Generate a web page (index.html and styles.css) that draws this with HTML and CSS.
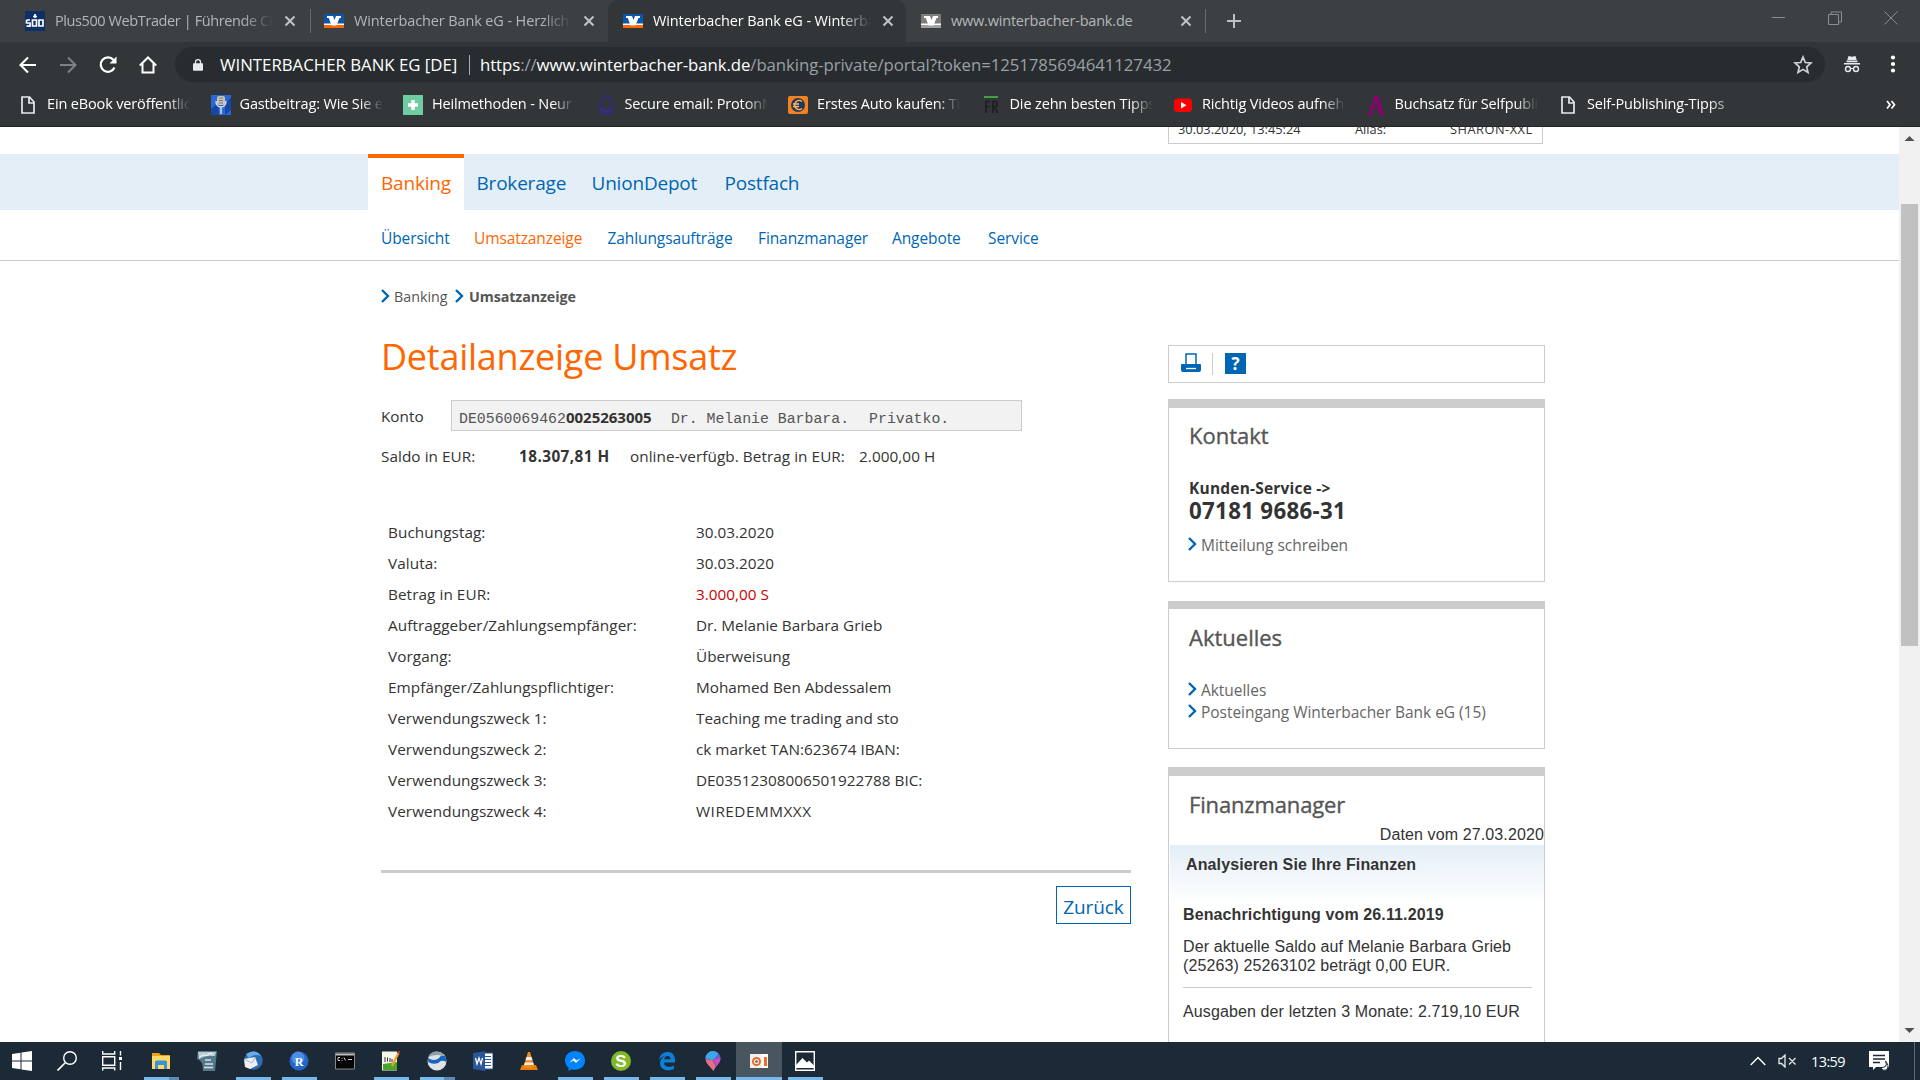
FILE: index.html
```html
<!DOCTYPE html>
<html lang="de">
<head>
<meta charset="utf-8">
<title>Winterbacher Bank eG - Umsatzanzeige</title>
<link rel="stylesheet" href="styles.css">
</head>
<body>
<svg class="defs" aria-hidden="true">
  <symbol id="vr" viewBox="0 0 20 16"><path fill="#fff" d="M3 3h6l1.500 4L12 3h5v2h-1.500L12.500 12.500h-5L4.800 5H3z"/></symbol>
  <symbol id="x" viewBox="0 0 12 12"><path d="M1.500 1.500l9 9M10.500 1.500l-9 9" fill="none" stroke="currentColor" stroke-width="2"/></symbol>
  <symbol id="page" viewBox="0 0 14 18"><path d="M1 1h7.500L13 6v11H1zM8 1v6h5" fill="none" stroke="#e8eaed" stroke-width="1.700"/></symbol>
  <symbol id="chev" viewBox="0 0 9 14"><path d="M1 1l6 6-6 6" fill="none" stroke="#0066b3" stroke-width="2.400"/></symbol>
</svg>
<div class="screen">
  <header class="browser">
    <div class="tabstrip">
      <div class="tab t1"><svg class="fav" viewBox="0 0 20 20"><rect width="20" height="20" fill="#0c2f66"/><path d="M1.500 9H5M1.500 9v3h3.500v3.200H1.500M7.500 9h4v6h-4zM14 9h4v6h-4zM10 3v4M8 5.500h4" fill="none" stroke="#fff" stroke-width="1.700"/></svg><span class="title">Plus500 WebTrader | Führende CF</span><svg class="close"><use href="#x"/></svg></div>
      <div class="tab t2"><svg class="fav" viewBox="0 0 20 20"><rect y="3" width="20" height="14" fill="#0a56ab"/><rect y="14" width="20" height="3" fill="#f60"/><rect y="12.500" width="20" height="1.500" fill="#fff"/><use href="#vr" y="2" width="20" height="16"/></svg><span class="title">Winterbacher Bank eG - Herzlich</span><svg class="close"><use href="#x"/></svg></div>
      <div class="tab active"><svg class="fav" viewBox="0 0 20 20"><rect y="3" width="20" height="14" fill="#0a56ab"/><rect y="14" width="20" height="3" fill="#f60"/><rect y="12.500" width="20" height="1.500" fill="#fff"/><use href="#vr" y="2" width="20" height="16"/></svg><span class="title">Winterbacher Bank eG - Winterba</span><svg class="close"><use href="#x"/></svg></div>
      <div class="tab t4"><svg class="fav" viewBox="0 0 20 20"><rect y="3" width="20" height="14" fill="#7d7d7d"/><rect y="14" width="20" height="3" fill="#a0a0a0"/><rect y="12.500" width="20" height="1.500" fill="#fff"/><use href="#vr" y="2" width="20" height="16"/></svg><span class="title">www.winterbacher-bank.de</span><svg class="close"><use href="#x"/></svg></div>
      <svg class="plus" viewBox="0 0 16 16"><path d="M8 1v14M1 8h14" stroke="#bdc1c6" stroke-width="2"/></svg>
      <div class="winctl">
        <svg viewBox="0 0 14 14"><path d="M0 6.500h13" stroke="#8c8f92"/></svg>
        <svg viewBox="0 0 14 14"><path d="M.5 3.500h10v10H.5zM3 3V1h10.500v10H11" fill="none" stroke="#8c8f92"/></svg>
        <svg viewBox="0 0 14 14"><path d="M.5 .5l13 13M13.500 .5l-13 13" stroke="#8c8f92"/></svg>
      </div>
    </div>
    <div class="toolbar">
      <div class="navicons">
        <svg viewBox="0 0 20 20"><path d="M18 10H3M10 2.500L2.500 10l7.500 7.500" fill="none" stroke="#fff" stroke-width="2.100"/></svg>
        <svg viewBox="0 0 20 20"><path d="M2 10h15M10 2.500l7.500 7.500-7.500 7.500" fill="none" stroke="#7f8285" stroke-width="2"/></svg>
        <svg viewBox="0 0 20 20"><path d="M16.500 12.500A7.200 7.200 0 1 1 15.500 5" fill="none" stroke="#fff" stroke-width="2.200"/><path d="M18.500 1.500v7h-7z" fill="#fff"/></svg>
        <svg viewBox="0 0 20 20"><path d="M1.800 10.500L10 2.500l8.200 8M4.500 8.500v9h11v-9" fill="none" stroke="#fff" stroke-width="2"/></svg>
      </div>
      <div class="omnibox">
        <svg class="lock" viewBox="0 0 12 14"><path d="M1 5h10a1 1 0 0 1 1 1v7a1 1 0 0 1-1 1H1a1 1 0 0 1-1-1V6a1 1 0 0 1 1-1z" fill="#e8eaed"/><path d="M3 6V3.500a3 3 0 0 1 6 0V6" fill="none" stroke="#e8eaed" stroke-width="1.500"/></svg>
        <span class="org">WINTERBACHER BANK EG [DE]</span><i class="bar"></i>
        <span class="url"><span class="scheme">https<s>://</s>www.winterbacher-bank.de</span><span class="path">/banking-private/portal?token=1251785694641127432</span></span>
        <svg class="star" viewBox="0 0 20 20"><path d="M10 2l2.300 5.500 5.700.5-4.300 3.900L15 17.500l-5-3.100-5 3.100 1.300-5.600L2 8l5.700-.5z" fill="none" stroke="#d0d3d6" stroke-width="1.700"/></svg>
      </div>
      <svg class="incog" viewBox="0 0 18 18"><path d="M5.500 1l3.500.7 3.500-.7 1.200 4H4.300zM3.500 5.500h11v1.700h-11zM1 8h16v1.400H1z" fill="#e8eaed"/><circle cx="5" cy="14" r="2.500" fill="none" stroke="#e8eaed" stroke-width="1.400"/><circle cx="13" cy="14" r="2.500" fill="none" stroke="#e8eaed" stroke-width="1.400"/><path d="M7.500 13.500h3" stroke="#e8eaed"/></svg>
      <svg class="dots" viewBox="0 0 6 18"><g fill="#fff"><circle cx="3" cy="2.500" r="2.100"/><circle cx="3" cy="9" r="2.100"/><circle cx="3" cy="15.500" r="2.100"/></g></svg>
    </div>
    <div class="bookmarks">
      <div class="bm"><svg class="pg"><use href="#page"/></svg><span>Ein eBook veröffentlic</span></div>
      <div class="bm"><svg viewBox="0 0 20 20"><rect width="20" height="20" fill="#2869d8"/><path d="M0 14l7-6 1 12H0zM14 8l6-5v12l-6 5z" fill="#1747a5"/><rect x="6" y="1" width="8" height="9" rx="2" fill="#c9c6b8"/><path d="M8 3h4M8 5.500h4M8 8h4" stroke="#777"/><path d="M5 6c0 8 10 8 10 0M10 12v7" fill="none" stroke="#ddd" stroke-width="1.500"/></svg><span>Gastbeitrag: Wie Sie e</span></div>
      <div class="bm"><svg viewBox="0 0 20 20"><rect width="20" height="20" fill="#6fcba0"/><path d="M10 5v10M5 10h10" stroke="#fff" stroke-width="3.500"/></svg><span>Heilmethoden - Neur</span></div>
      <div class="bm"><svg viewBox="0 0 20 20"><path d="M5 10V6a5 5 0 0 1 10 0v4" fill="none" stroke="#302e6c" stroke-width="2.500"/><path d="M3 9l7 4.500L17 9v9q0 2-2 2H5q-2 0-2-2z" fill="#302e6c"/><path d="M3.500 13l6.500 4 6.500-4" fill="none" stroke="#3b3968"/></svg><span>Secure email: ProtonM</span></div>
      <div class="bm"><svg viewBox="0 0 20 20"><rect y="1" width="20" height="18" rx="2" fill="#f58220"/><circle cx="10" cy="10" r="7" fill="#203a5b"/><path d="M14 6.500a4.500 4.500 0 1 0 0 7M5 9h6M5 11.500h6" fill="none" stroke="#ffb35d" stroke-width="1.500"/></svg><span>Erstes Auto kaufen: Ti</span></div>
      <div class="bm"><svg viewBox="0 0 20 20"><path d="M3 2h14" stroke="#41ad49" stroke-width="1.800"/><path d="M5 18V6.500h4M5 11.500h3.500M12 18V6.500h2q2 0 2 2.500t-2 2.500h-2M14 11.500l2.500 6.500" fill="none" stroke="#202124" stroke-width="2"/></svg><span>Die zehn besten Tipps</span></div>
      <div class="bm"><svg viewBox="0 0 20 20"><rect x="1" y="3.500" width="18" height="13.500" rx="3.500" fill="#f00"/><path d="M8 7l5.500 3.200L8 13.500z" fill="#fff"/></svg><span>Richtig Videos aufneh</span></div>
      <div class="bm"><svg viewBox="0 0 20 20"><path d="M2 18.500h5M13 18.500h5M4.500 18L9 2h2l4.500 16M7 12.500h6" fill="none" stroke="#8c0070" stroke-width="2.500"/><path d="M11 2l4.500 16" stroke="#8c0070" stroke-width="3.500"/></svg><span>Buchsatz für Selfpubli</span></div>
      <div class="bm"><svg class="pg"><use href="#page"/></svg><span class="last">Self-Publishing-Tipps</span></div>
      <svg class="more" viewBox="0 0 10 10"><path d="M1 1l3 3.700L1 8.500M5.500 1l3 3.700-3 3.800" fill="none" stroke="#fff" stroke-width="1.700"/></svg>
    </div>
  </header>

  <div class="viewport">
    <main class="page">
      <div class="tophead"><div class="session"><span>30.03.2020, 13:45:24</span><span>Alias:</span><span class="alias">SHARON-XXL</span></div></div>
      <nav class="mainnav"><a class="on"><b>Banking</b></a><a>Brokerage</a><a>UnionDepot</a><a>Postfach</a></nav>
      <nav class="subnav"><a>Übersicht</a><a class="on">Umsatzanzeige</a><a>Zahlungsaufträge</a><a>Finanzmanager</a><a>Angebote</a><a>Service</a></nav>
      <div class="columns">
        <section class="left">
          <div class="crumbs"><svg><use href="#chev"/></svg><span class="c1">Banking</span><svg><use href="#chev"/></svg><b>Umsatzanzeige</b></div>
          <h1>Detailanzeige Umsatz</h1>
          <div class="konto"><label>Konto</label><div class="field"><span class="mono">DE0560069462</span><b>0025263005</b><span class="mono holder">Dr. Melanie Barbara.</span><span class="mono">Privatko.</span></div></div>
          <div class="saldo"><span>Saldo in EUR:</span><b>18.307,81 H</b><span>online-verfügb. Betrag in EUR:</span><span>2.000,00 H</span></div>
          <dl class="details">
            <dt>Buchungstag:</dt><dd>30.03.2020</dd>
            <dt>Valuta:</dt><dd>30.03.2020</dd>
            <dt>Betrag in EUR:</dt><dd class="neg">3.000,00 S</dd>
            <dt>Auftraggeber/Zahlungsempfänger:</dt><dd>Dr. Melanie Barbara Grieb</dd>
            <dt>Vorgang:</dt><dd>Überweisung</dd>
            <dt>Empfänger/Zahlungspflichtiger:</dt><dd>Mohamed Ben Abdessalem</dd>
            <dt>Verwendungszweck 1:</dt><dd>Teaching me trading and sto</dd>
            <dt>Verwendungszweck 2:</dt><dd>ck market TAN:623674 IBAN:</dd>
            <dt>Verwendungszweck 3:</dt><dd>DE03512308006501922788 BIC:</dd>
            <dt>Verwendungszweck 4:</dt><dd class="bic">WIREDEMMXXX</dd>
          </dl>
          <div class="actions"><a class="back">Zurück</a></div>
        </section>
        <aside class="right">
          <div class="tools">
            <svg class="print" viewBox="0 0 20 19"><path d="M5 11V1h10v10" fill="#fff" stroke="#0066b3" stroke-width="1.500"/><path d="M1 11h18a1 1 0 0 1 1 1v5q0 2-2 2H2q-2 0-2-2v-5a1 1 0 0 1 1-1z" fill="#0066b3"/><path d="M5 15.500h10" stroke="#fff" stroke-width="1.300"/></svg>
            <i></i><span class="help">?</span>
          </div>
          <div class="card contact"><h2>Kontakt</h2><p class="svc">Kunden-Service -&gt;</p><p class="phone">07181 9686-31</p><a class="link"><svg><use href="#chev"/></svg>Mitteilung schreiben</a></div>
          <div class="card news"><h2>Aktuelles</h2><a class="link"><svg><use href="#chev"/></svg>Aktuelles</a><a class="link"><svg><use href="#chev"/></svg>Posteingang Winterbacher Bank eG (15)</a></div>
          <div class="card fin"><h2>Finanzmanager</h2><p class="date">Daten vom 27.03.2020</p><div class="analyse">Analysieren Sie Ihre Finanzen</div><div class="finbody"><p class="note">Benachrichtigung vom 26.11.2019</p><p class="msg">Der aktuelle Saldo auf Melanie Barbara Grieb<br>(25263) 25263102 beträgt 0,00 EUR.</p><p class="spend">Ausgaben der letzten 3 Monate: 2.719,10 EUR</p></div></div>
        </aside>
      </div>
    </main>
    <div class="scroll"><svg viewBox="0 0 21 21"><path d="M5.500 14l5-5 5 5z" fill="#505050"/></svg><i class="thumb"></i><svg viewBox="0 0 21 21"><path d="M5.500 7l5 5 5-5z" fill="#505050"/></svg></div>
  </div>

  <footer class="taskbar">
    <div class="sys"><svg viewBox="0 0 20 20"><path d="M0 3l8.500-1.200v7.700H0zM9.500 1.600L20 0v9.500H9.500zM0 10.500h8.500v7.700L0 17zM9.500 10.500H20V20L9.500 18.400z" fill="#fff"/></svg></div>
    <div class="sys"><svg viewBox="0 0 20 20"><circle cx="13" cy="7" r="6.300" fill="none" stroke="#fff" stroke-width="1.400"/><path d="M8.500 11.500L.5 19.500" stroke="#fff" stroke-width="1.600"/></svg></div>
    <div class="sys task"><svg viewBox="0 0 20 20"><path d="M.7 0v3h12V0M.7 5.700h12v8.600H.7zM.7 19.500V17h12v2.500M18.500 0v4.500M18.500 11v8" fill="none" stroke="#fff" stroke-width="1.400"/><path d="M17 6h3v3h-3z" fill="#fff"/></svg></div>
    <div class="app run multi"><svg viewBox="0 0 20 20"><path d="M1 2h7l2 2h9v14H1z" fill="#e8a317"/><path d="M1 5h18v13H1z" fill="#ffd968"/><path d="M4 11q0-1.500 1.500-1.500h9q1.500 0 1.500 1.500v7h-3v-4H7v4H4z" fill="#3b92d4"/></svg></div>
    <div class="app"><svg viewBox="0 0 20 20"><path d="M1 0h19l-2 20H6Q6 9 0 8z" fill="#56788c"/><path d="M1 1h18l-1 4H9L2 8z" fill="#b8ccd3"/><path d="M2 7q4-5 7-2 4-4 7-2" fill="none" stroke="#fff"/><path d="M8 9h6M8 13h8M7 16.500h9" stroke="#d5e0e5" stroke-width="1.500"/></svg></div>
    <div class="app run"><svg viewBox="0 0 20 20"><circle cx="10.500" cy="9.500" r="9.300" fill="#2e6bb4"/><path d="M3 3Q12-3 18 5q-7-3-12 2z" fill="#65adeb"/><path d="M1 8l11-2 3 8-8 4-5-2z" fill="#eef1f3"/><path d="M1 8l8 4 3-6" fill="none" stroke="#a9b7c4"/></svg></div>
    <div class="app run"><svg viewBox="0 0 20 20"><circle cx="10" cy="10" r="9.500" fill="#2465c8"/><circle cx="9" cy="7" r="6.500" fill="#4d8ce4"/><text x="10" y="14.500" text-anchor="middle" class="icserif">R</text></svg></div>
    <div class="app"><svg viewBox="0 0 20 20"><path d="M.5 2h19v16H.5z" fill="#050505" stroke="#888"/><path d="M1 3.500h18" stroke="#bbb" stroke-width="2"/><path d="M5 6.500H3v3h2M7 7v.8M7 9v.8M9 6.500l1.500 3M13 8.500h4" stroke="#ccc" fill="none"/></svg></div>
    <div class="app run"><svg viewBox="0 0 20 20"><path d="M1 .5h15v19H1z" fill="#f4f6ee"/><path d="M2 13l14-2v8H2z" fill="#4ba62b"/><path d="M4 6v5M6.500 6.500v4M9 7v4M11 8v3" stroke="#333"/><path d="M17.500 2L11 15" stroke="#f1a020" stroke-width="2.300"/><path d="M17 2l1.500-2" stroke="#c33" stroke-width="2"/></svg></div>
    <div class="app run multi"><svg viewBox="0 0 20 20"><circle cx="10" cy="10" r="9.500" fill="#e0e3e6"/><path d="M1.500 6Q5-1 12 1q6 2 7 8-3-5-8-5Q5 4 1.500 6z" fill="#8fa0ac"/><path d="M.8 7q8 5 13-2h4q2 3 1.500 6-5-3-8 1-6 2-10-1z" fill="#1565c0"/></svg></div>
    <div class="app"><svg viewBox="0 0 20 20"><path d="M11 2h9v16h-9z" fill="#fff" stroke="#2b579a"/><path d="M12 5.500h6M12 8.500h6M12 11.500h6M12 14.500h6" stroke="#2b579a"/><path d="M0 2l12-2v20L0 18z" fill="#2b579a"/><path d="M2.500 7l1.500 6 2-6 2 6L9.500 7" fill="none" stroke="#fff" stroke-width="1.300"/></svg></div>
    <div class="app"><svg viewBox="0 0 20 20"><path d="M3 14h14l2 5H1z" fill="#f27b0a"/><path d="M9 1h2l4.500 15q-5.500 2-11 0z" fill="#f58a1b"/><path d="M7.500 6h5l1 3.200h-7zM5.800 11.500h8.400l.7 2.500H5z" fill="#eee"/></svg></div>
    <div class="app run"><svg viewBox="0 0 20 20"><path d="M10 0C4 0 0 4 0 9.500c0 3 1.200 5.400 3.500 7V20l3.200-1.700q1.500.5 3.300.5c6 0 10-4 10-9.300S16 0 10 0z" fill="#0084ff"/><path d="M4 12l5-5 2.500 2.500L16 7l-5 5-2.500-2.500z" fill="#fff"/></svg></div>
    <div class="app run"><svg viewBox="0 0 20 20"><circle cx="10" cy="10" r="10" fill="#82b828"/><text x="10" y="16" text-anchor="middle" class="icsans">S</text></svg></div>
    <div class="app run"><svg viewBox="0 0 20 20"><path d="M2 9C3 3 7 1 10.500 1c5 0 7.500 3.500 7.500 8v2.500H7c0 3 2 4.300 5 4.300 2 0 3.700-.5 5-1.300V18c-1.500.8-3.500 1.300-6 1.300-5 0-8-3-8-7.300C3 9 5 6.500 7.500 5.500 5 5.600 3.500 7 2 9zm5.200-.7h6.300C13.500 6 12 5 10.500 5S7.500 6 7.200 8.300z" fill="#0c7fd9"/></svg></div>
    <div class="app run"><svg viewBox="0 0 20 20"><path d="M10 0a7.500 7.500 0 0 1 7.500 7.500C17.500 12 13 15 10.500 20 7 15 2.500 12 2.500 7.500A7.500 7.500 0 0 1 10 0z" fill="#7757cf"/><path d="M10 0a7.500 7.500 0 0 0-7.500 7.500L10 9l5.500-6.500Q13 0 10 0z" fill="#36a9e8"/><path d="M17.500 7q0 4-4 8L10 9z" fill="#c94fb0"/><path d="M2.600 8.500q.5 3.500 4.500 7.500 2 2 3.400 4l2-5L9 9z" fill="#ed6d7e"/></svg></div>
    <div class="app run current"><svg viewBox="0 0 20 20"><path d="M1 3h18v14H1z" fill="#f5eee9"/><path d="M12 3h7v14h-6z" fill="#fff"/><circle cx="7.500" cy="10.500" r="3.500" fill="#fff" stroke="#ec6824" stroke-width="2"/><circle cx="7.500" cy="10.500" r="1.300" fill="#555"/><path d="M15 6h3v9h-3z" fill="#f16c2a"/></svg></div>
    <div class="app run"><svg viewBox="0 0 20 20"><path d="M.7.700h18.600v18.600H.7z" fill="#1b2a36" stroke="#fff" stroke-width="1.400"/><path d="M1 14l6.500-7 4.500 4.500 2-2 5 5V17H1z" fill="#fff"/></svg></div>
    <div class="tray">
      <svg class="up" viewBox="0 0 16 10"><path d="M.7 9L8 1.500 15.300 9" fill="none" stroke="#fff" stroke-width="1.400"/></svg>
      <svg class="vol" viewBox="0 0 19 14"><path d="M1 4.500h2.500L7 1v12L3.500 9.500H1zM11 4l6.500 6.500M17.500 4L11 10.500" fill="none" stroke="#e8eaed" stroke-width="1.300"/></svg>
      <span class="clock">13:59</span>
      <svg class="note-ic" viewBox="0 0 20 20"><path d="M0 0h20v16H11l-4 0-3 3v-3H0z" fill="#fff"/><path d="M4 4.500h12M4 8h12M4 11.500h7" stroke="#1b2a36" stroke-width="1.300"/><path d="M16.500 10q3 7-5 6.500 2.500 4 6 2.500 3.500-4-1-9z" fill="#fff" stroke="#1b2a36"/></svg>
      <i class="peek"></i>
    </div>
  </footer>
</div>
</body>
</html>
```
FILE: styles.css
```css
*{box-sizing:border-box}
body{margin:0;background:#fff;font-family:"Open Sans","Noto Sans",sans-serif;color:#333;overflow:hidden}
svg{display:block;flex:none}
p,h1,h2,dl,dd{margin:0;font-weight:400}
.defs{display:none}
.screen{width:1920px;height:1080px;display:flex;flex-direction:column;overflow:hidden}

.browser{flex:none;height:127px;background:#323639;border-bottom:1px solid #222427;color:#fff}
.tabstrip{height:42px;background:#3c4043;display:flex;align-items:stretch}
.tab{display:flex;align-items:center;height:42px;color:#b4b7ba;font-size:14.500px;letter-spacing:-.2px;position:relative}
.tab .fav{width:20px;height:20px;margin-right:10px}
.tab .title{width:218px;overflow:hidden;white-space:nowrap;line-height:34px;height:34px;mask-image:linear-gradient(90deg,#000 86%,transparent)}
.tab .close{width:12px;height:12px;margin-left:11px;color:#c0c3c6}
.t1{width:311px;padding-left:25px}
.t1 .title{letter-spacing:-.4px}
.t2{width:297px;padding-left:13px}
.t2 .title,.active .title{letter-spacing:-.12px}
.active{width:298px;padding-left:15px;background:#323639;color:#fff;border-radius:10px 10px 0 0}
.t4{width:300px;padding-left:15px}
.tab.t4 .title{width:218px;mask-image:none}
.t1::after,.t4::after{content:"";position:absolute;right:0;top:9px;width:1px;height:24px;background:#686b6e}
.plus{width:16px;height:16px;margin:13px 0 0 20px}
.winctl{display:flex;gap:42px;margin:11px 22px 0 auto}
.winctl svg{width:14px;height:14px}
.toolbar{height:40px;margin-top:5px;display:flex;align-items:flex-start}
.navicons{display:flex;gap:20px;padding:8px 0 0 18px;width:175px}
.navicons svg{width:20px;height:20px}
.omnibox{height:35px;width:1650px;border-radius:18px;background:#282c2f;display:flex;align-items:center;font-size:16.800px;line-height:34px}
.lock{width:10px;height:14px;margin-left:18px}
.org{width:236px;margin-left:17px;white-space:nowrap;letter-spacing:0}
.bar{width:1px;height:20px;background:#aaa;margin:0 10px 0 13px}
.url{white-space:nowrap;letter-spacing:-.08px}
.url s{text-decoration:none;color:#9aa0a6}
.path{color:#9aa0a6}
.star{width:20px;height:20px;margin:0 12px 0 auto}
.incog{width:18px;height:18px;margin:8px 0 0 18px}
.dots{width:6px;height:18px;margin:8px 0 0 29px}
.bookmarks{height:36px;display:flex;align-items:center;padding-left:18px;font-size:14.500px}
.bm{display:flex;align-items:center;width:192.500px}
.bm svg{width:20px;height:20px;margin-right:9px}
.bm .pg{width:14px;height:18px;margin:0 12px 0 3px}
.bm span{width:143px;overflow:hidden;white-space:nowrap;letter-spacing:-.15px;line-height:20px;padding-bottom:2px;mask-image:linear-gradient(90deg,#000 84%,transparent)}
.bm svg+.last{mask-image:linear-gradient(90deg,#000 84%,#0006)}
.more{width:10px;height:10px;margin-left:135px}

.viewport{height:915px;flex:none;display:flex;overflow:hidden}
.page{width:1899px;height:915px;overflow:hidden}
.tophead{height:27px;padding-left:1168px}
.session{width:375px;height:17px;border:1px solid #ccc;border-top:0;display:grid;grid-template-columns:177px 95px 1fr;padding-left:9px;font-size:12.800px;line-height:20px;overflow:hidden;white-space:nowrap}
.session span{margin-top:-8px}
.session .alias{letter-spacing:.5px}
.mainnav{height:56px;background:#e4eef7;padding-left:368px;display:grid;grid-template-columns:108.500px 115px 133px 120px;align-items:stretch;font-size:19px;line-height:58px;color:#0066b3;letter-spacing:-.2px}
.mainnav .on{width:96px;background:#fff;border-top:4px solid #f60;color:#f60;padding-left:13px;line-height:50px}
.mainnav b{font-weight:400}
.subnav{height:51px;border-bottom:1px solid #ccc;padding:6px 0 0 381px;display:grid;grid-template-columns:93px 133.500px 150.500px 134px 96px 80px;font-size:15.500px;line-height:45px;color:#0066b3;letter-spacing:-.1px}
.subnav .on{color:#f60}
.columns{display:flex;padding-left:381px}
.left{width:750px;padding-top:23px;font-size:15.300px}
.crumbs{display:flex;align-items:center;height:24px;font-size:14.300px;color:#555}
.crumbs svg,.link svg{width:9px;height:14px;margin-right:4px}
.crumbs .c1{width:61px}
.crumbs b{margin-left:1px;letter-spacing:-.1px}
h1{font-size:36px;line-height:50px;margin-top:24px;color:#f60;white-space:nowrap;letter-spacing:-.25px}
.konto{display:flex;height:31px;margin-top:18px}
.konto label{width:70px;line-height:33px}
.field{width:571px;height:31px;border:1px solid #ccc;background:#f2f2f2;display:flex;align-items:baseline;padding-left:7px;line-height:33px;white-space:pre}
.field b{font-size:15px;width:87px}
.mono{font-family:"Liberation Mono",monospace;font-size:14.850px;color:#555}
.field .holder{margin:0 20px 0 18px}
.saldo{margin-top:10px;height:30px;line-height:30px;display:grid;grid-template-columns:138px 111px 229px 100px;white-space:nowrap}
.saldo b{letter-spacing:.45px}
.saldo span{letter-spacing:.06px}
.details{margin-top:46px;display:grid;grid-template-columns:308px 1fr;padding-left:7px;line-height:31px;white-space:nowrap}
.details dt{letter-spacing:.07px}
.details .bic{letter-spacing:.5px}
.neg{color:#cc0000}
.actions{margin-top:43px;border-top:3px solid #ccc;padding-top:13px;display:flex;justify-content:flex-end}
.back{width:75px;height:38px;border:1px solid #0066b3;color:#0066b3;font-size:19px;text-align:center;line-height:40px;letter-spacing:-.1px}

.right{width:377px;margin-left:37px;padding-top:84px}
.tools{height:38px;border:1px solid #ccc;padding:7px 12px;display:flex}
.print{width:20px;height:19px}
.tools i{width:1px;height:22px;background:#ccc;margin:0 12px 0 11px}
.help{width:21px;height:21px;background:#0066b3;color:#fff;font-weight:700;font-size:17px;line-height:22px;text-align:center}
.card{border:1px solid #ccc;border-top:9px solid #ccc;padding-left:20px;font-size:15.500px;white-space:nowrap}
.card h2{font-size:22px;line-height:30px;color:#555;-webkit-text-stroke:.35px #555}
.contact{height:183px;margin-top:16px;padding-top:12px}
.svc{font-weight:700;margin-top:26px;line-height:24px;font-size:15.500px;letter-spacing:.2px}
.phone{font-weight:700;font-size:22.300px;line-height:24px;margin-top:-1px;letter-spacing:.3px}
.link{display:flex;align-items:center;line-height:22px;color:#666;margin-left:-1px;letter-spacing:-.04px}
.link svg{margin:-3px 4px 0 0}
.contact .link{margin-top:11px}
.news{height:148px;margin-top:19px;padding-top:13px;border-top-width:8px}
.news h2+.link{margin-top:27px}
.fin{height:400px;margin-top:18px;padding:13px 0 0 1px;font-family:"Liberation Sans",Arial,sans-serif;font-size:16px;letter-spacing:.12px}
.fin h2{font-family:"Open Sans","Noto Sans",sans-serif;padding-left:19px;letter-spacing:-.15px}
.date{text-align:right;line-height:22px;margin-top:5px;height:21px}
.analyse{height:60px;background:linear-gradient(#e4eef7,#fff);font-weight:700;padding-left:16px;line-height:40px}
.finbody{padding:0 12px 0 13px}
.note{font-weight:700;line-height:20px}
.msg{line-height:19px;padding:12px 0 12px;border-bottom:1px solid #ccc}
.spend{line-height:20px;margin-top:14px}

.scroll{width:21px;height:915px;background:#f1f1f1;display:flex;flex-direction:column}
.scroll svg{width:21px;height:21px}
.scroll .thumb{width:17px;height:442px;margin:56px 2px auto;background:#c1c1c1}

.taskbar{height:38px;background:#1b2a36;display:flex}
.sys{width:45px;height:38px;padding:9px 0 0 12px}
.sys svg,.app svg{width:20px;height:20px}
.task{width:48px}
.app{width:46px;height:38px;display:flex;justify-content:center;padding-top:9px;background:linear-gradient(#76b9ed,#76b9ed) 6px 35px/0 3px no-repeat}
.run{background-size:35px 3px}
.multi{background-image:linear-gradient(90deg,#76b9ed 70%,#5b8bb2 70%)}
.current{background-color:#485660;background-position:0 35px;background-size:46px 3px}
.icserif{font:bold 12px "Liberation Serif",serif;fill:#fff}
.icsans{font:bold 17px "Liberation Sans",sans-serif;fill:#fff}
.tray{margin-left:auto;display:flex;align-items:center;color:#fff;width:170px;height:38px}
.up{width:16px;height:10px}
.vol{width:19px;height:14px;margin-left:12px}
.clock{width:35px;margin-left:14px;font-size:14.500px;letter-spacing:-.6px}
.note-ic{width:20px;height:20px;margin-left:23px}
.peek{width:1px;height:38px;background:#5d6871;margin-left:25px}
```
